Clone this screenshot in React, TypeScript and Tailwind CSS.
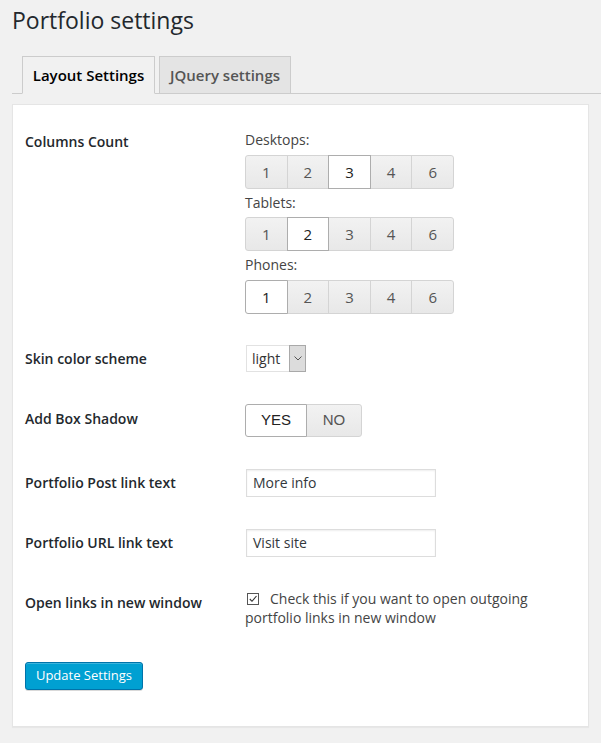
import React from "react";

const font = { fontFamily: '"Open Sans", "Liberation Sans", sans-serif' };

function BtnGroup({ selected }: { selected: number }) {
  const vals = [1, 2, 3, 4, 6];
  return (
    <div className="flex w-[209px] h-[34px]">
      {vals.map((v, i) => {
        const sel = v === selected;
        const first = i === 0;
        const last = i === vals.length - 1;
        return (
          <div
            key={v}
            className={
              "flex-1 flex items-center justify-center text-[15px] border " +
              (first ? "rounded-l-[3px] " : "-ml-px ") +
              (last ? "rounded-r-[3px] " : "") +
              (sel
                ? "bg-white border-[#adadad] text-[#222] z-10"
                : "bg-gradient-to-b from-[#f2f2f2] to-[#e8e8e8] border-[#d4d4d4] text-[#555]")
            }
          >
            {v}
          </div>
        );
      })}
    </div>
  );
}

function Label({ children, className = "" }: { children: React.ReactNode; className?: string }) {
  return (
    <div className={"w-[220px] shrink-0 text-[14px] leading-[20px] font-semibold text-[#23282d] " + className}>
      {children}
    </div>
  );
}

export default function App() {
  return (
    <div className="min-h-screen bg-[#f1f1f1] pb-[15px]" style={font}>
      <h1 className="pl-[12px] pt-[6px] text-[23px] leading-[29px] font-normal text-[#23282d]">
        Portfolio settings
      </h1>

      <div className="mt-[21px] ml-[12px] flex gap-[4px] pl-[10px] border-b border-[#ccc] h-[38px]">
        <div className="-mb-px h-[38px] w-[133px] flex items-center justify-center border border-[#ccc] border-b-[#f1f1f1] bg-[#f1f1f1] text-[15px] font-semibold text-[#000]">
          Layout Settings
        </div>
        <div className="-mb-px h-[38px] w-[132px] flex items-center justify-center border border-[#ccc] bg-[#e4e4e4] text-[15px] font-semibold text-[#555]">
          JQuery settings
        </div>
      </div>

      <div className="mt-[10px] mx-[12px] bg-white border border-[#e5e5e5] shadow-[0_1px_1px_rgba(0,0,0,0.04)] pl-[12px] pt-[25px] pb-[36px] flex flex-col">
        {/* Columns count */}
        <div className="flex">
          <Label className="pt-[2px]">Columns Count</Label>
          <div className="flex flex-col text-[14px] leading-[20px] text-[#444]">
            <div>Desktops:</div>
            <div className="mt-[5px]">
              <BtnGroup selected={3} />
            </div>
            <div className="mt-[4px]">Tablets:</div>
            <div className="mt-[4px]">
              <BtnGroup selected={2} />
            </div>
            <div className="mt-[4px]">Phones:</div>
            <div className="mt-[5px]">
              <BtnGroup selected={1} />
            </div>
          </div>
        </div>

        {/* Skin */}
        <div className="flex items-center mt-[31px]">
          <Label>Skin color scheme</Label>
          <div className="ml-px flex h-[27px] w-[60px] border border-[#e2e2e2] bg-white">
            <div className="flex-1 flex items-center pl-[5px] text-[14px] text-[#333]">light</div>
            <div className="w-[17px] -my-px -mr-px bg-[#dcdcdc] border border-[#a9a9a9] flex items-center justify-center">
              <svg width="8" height="5" viewBox="0 0 8 5">
                <path d="M0.5 0.5 L4 4 L7.5 0.5" fill="none" stroke="#555" strokeWidth="1" />
              </svg>
            </div>
          </div>
        </div>

        {/* Box shadow */}
        <div className="flex items-center mt-[32px]">
          <Label className="mb-[4px]">Add Box Shadow</Label>
          <div className="flex h-[33px]" style={{ fontFamily: '"Liberation Sans", Arial, sans-serif' }}>
            <div className="w-[62px] flex items-center justify-center bg-white border border-[#adadad] rounded-l-[3px] text-[15px] text-[#222] z-10">
              YES
            </div>
            <div className="w-[56px] -ml-px flex items-center justify-center bg-gradient-to-b from-[#f2f2f2] to-[#e8e8e8] border border-[#d4d4d4] rounded-r-[3px] text-[15px] text-[#555]">
              NO
            </div>
          </div>
        </div>

        {/* Post link */}
        <div className="flex items-center mt-[32px]">
          <Label>Portfolio Post link text</Label>
          <div className="ml-px w-[190px] h-[28px] border border-[#ddd] shadow-[inset_0_1px_2px_rgba(0,0,0,0.07)] flex items-center pl-[6px] pb-[1px] text-[14px] text-[#32373c]">
            More info
          </div>
        </div>

        {/* URL link */}
        <div className="flex items-center mt-[32px]">
          <Label>Portfolio URL link text</Label>
          <div className="ml-px w-[190px] h-[28px] border border-[#ddd] shadow-[inset_0_1px_2px_rgba(0,0,0,0.07)] flex items-center pl-[6px] pb-[1px] text-[14px] text-[#32373c]">
            Visit site
          </div>
        </div>

        {/* Open links */}
        <div className="flex mt-[32px]">
          <Label className="pt-[4px]">Open links in new window</Label>
          <div className="text-[14px] leading-[19px] text-[#444] w-[310px]">
            <span className="inline-block align-[-1px] ml-[2px] mr-[11px] w-[12px] h-[12px] border border-[#555] bg-white relative">
              <svg width="10" height="10" viewBox="0 0 10 10" className="absolute left-0 top-0">
                <path d="M1.8 5 L4 7.3 L8.5 2" fill="none" stroke="#333" strokeWidth="1.1" />
              </svg>
            </span>
            Check this if you want to open outgoing
            <br />
            portfolio links in new window
          </div>
        </div>

        {/* Update */}
        <div className="mt-[35px]">
          <div className="w-[118px] h-[28px] bg-[#00a0d2] border border-[#0073aa] rounded-[3px] shadow-[inset_0_1px_0_rgba(120,200,230,0.5),0_1px_0_rgba(0,0,0,0.15)] flex items-center justify-center text-[13px] text-white">
            Update Settings
          </div>
        </div>
      </div>
    </div>
  );
}
